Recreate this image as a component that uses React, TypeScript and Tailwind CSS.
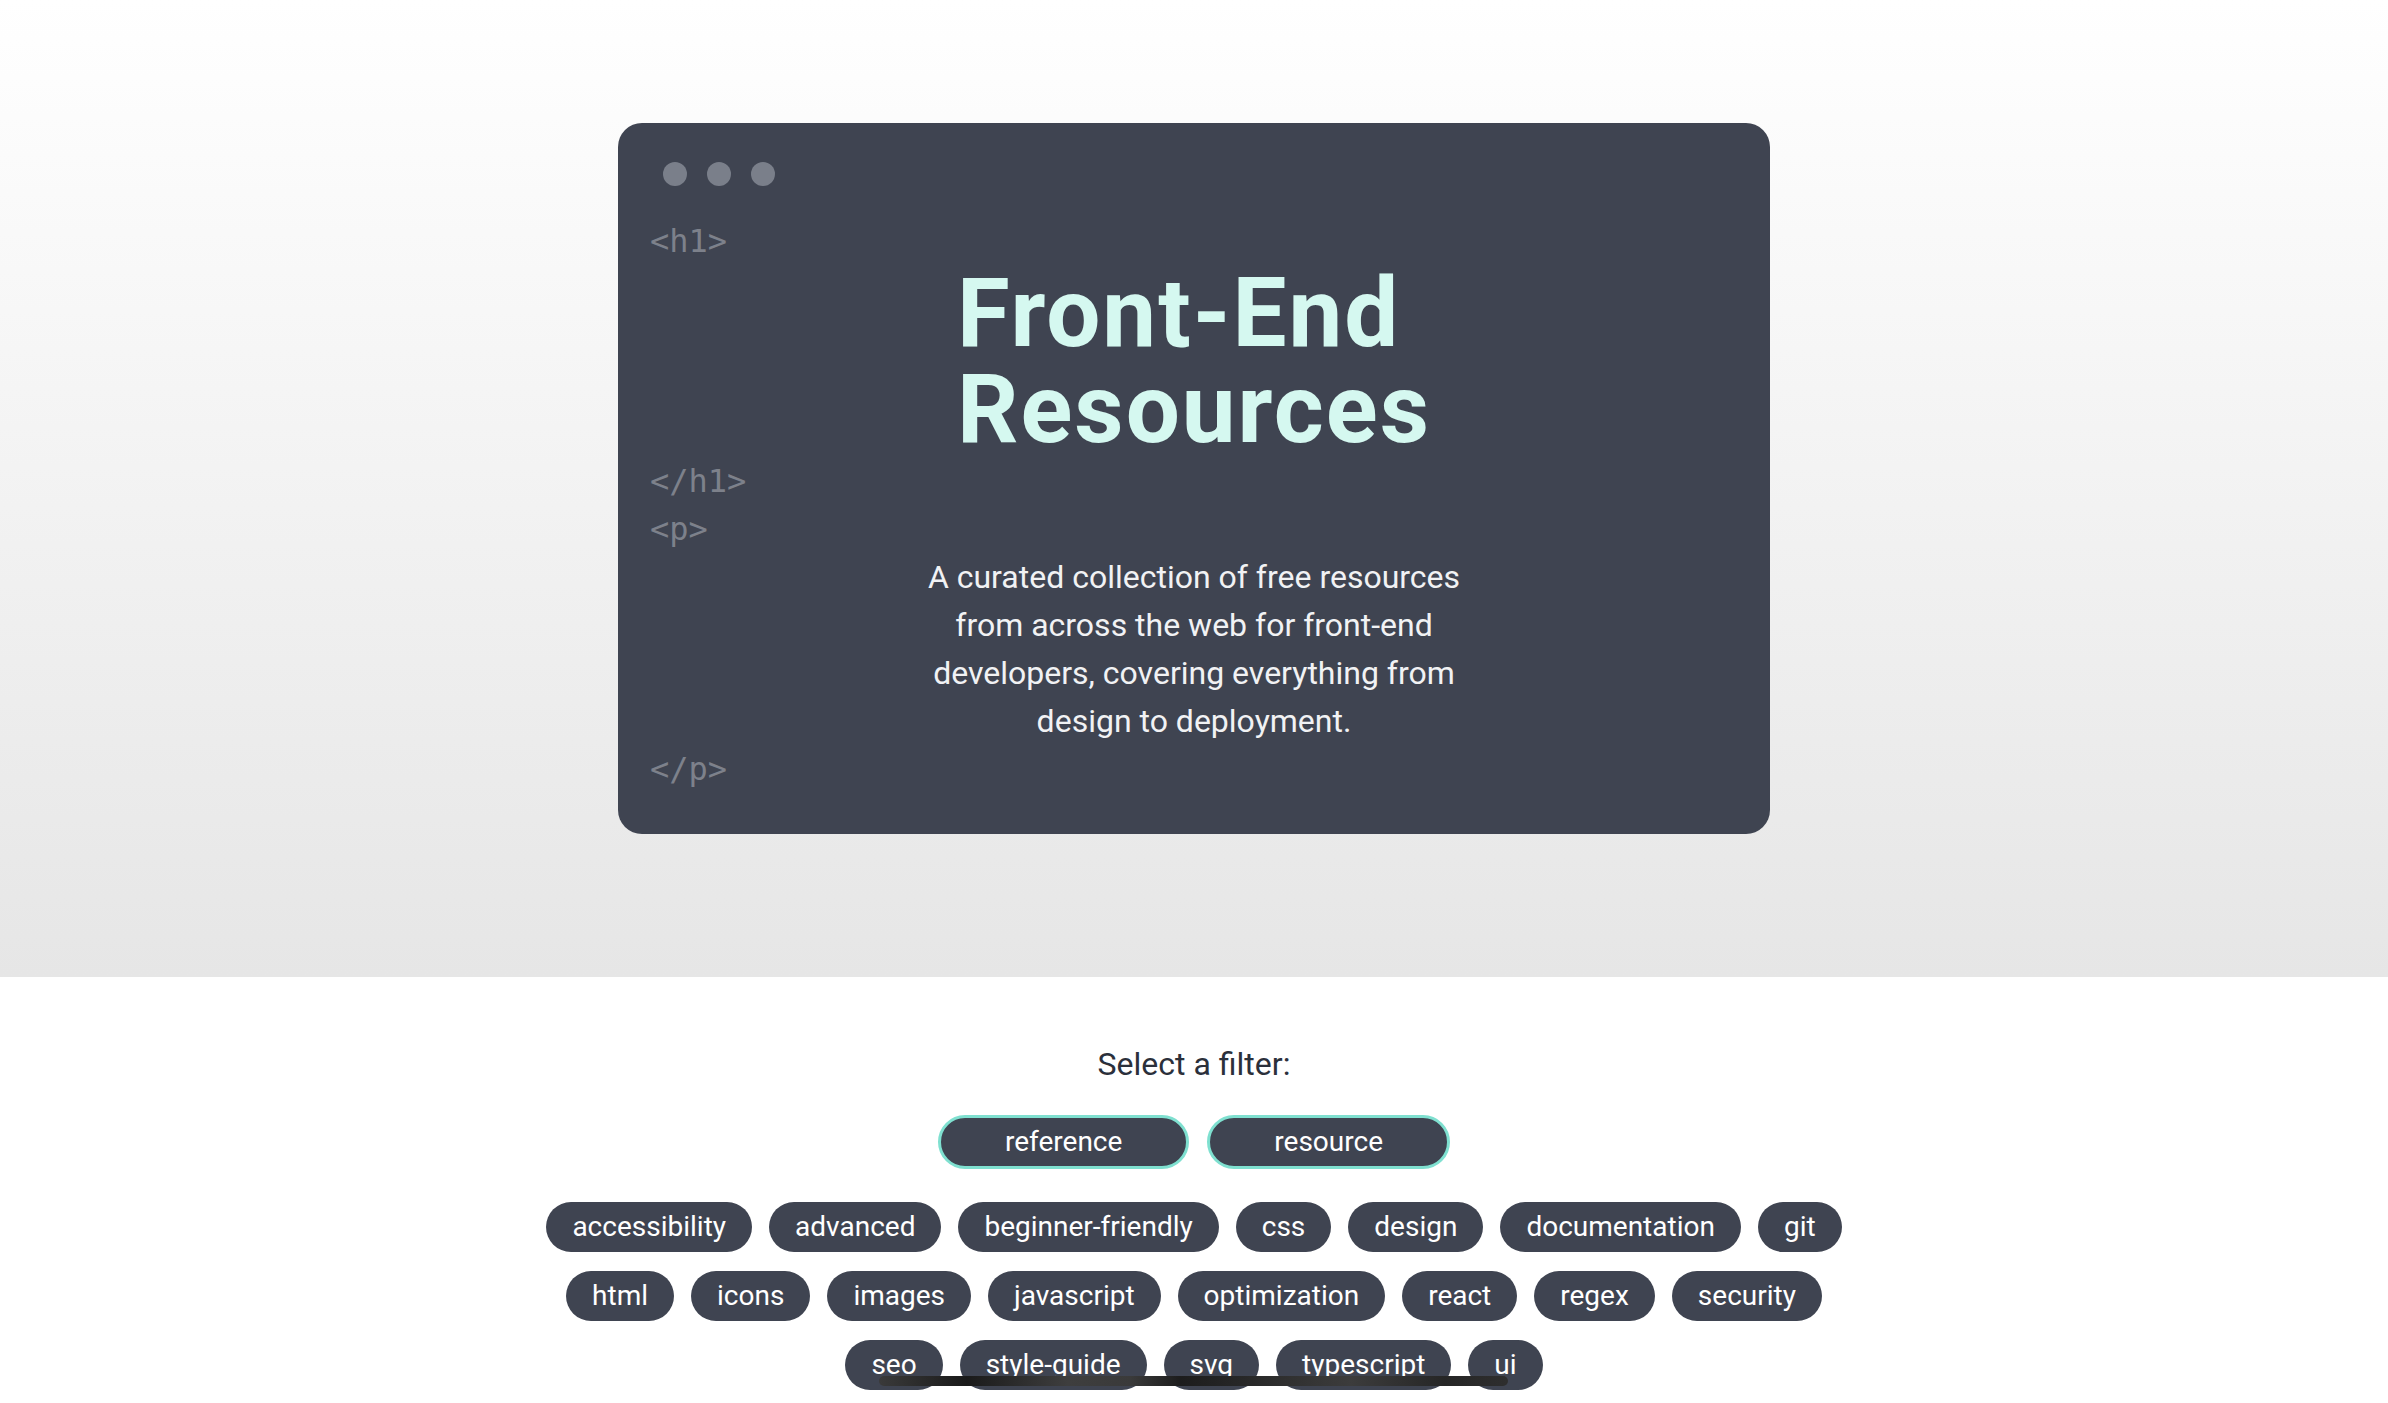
const tags = [
  "accessibility",
  "advanced",
  "beginner-friendly",
  "css",
  "design",
  "documentation",
  "git",
  "html",
  "icons",
  "images",
  "javascript",
  "optimization",
  "react",
  "regex",
  "security",
  "seo",
  "style-guide",
  "svg",
  "typescript",
  "ui",
];

const filters = ["reference", "resource"];

function CodeTag({ children }: { children: React.ReactNode }) {
  return (
    <span className="block w-fit font-['DejaVu_Sans_Mono',monospace] text-[32px] leading-[48px] text-[#7d818b]">
      {children}
    </span>
  );
}

function Hero() {
  return (
    <header className="bg-gradient-to-b from-white to-[#e6e6e6] pt-[123px] pb-[143px]">
      <div className="mx-auto w-[1152px] rounded-3xl bg-[#3f4451] px-8 pt-[39px] pb-[41px]">
        <div className="ml-[13px] flex gap-5">
          <span className="h-6 w-6 rounded-full bg-[#7a7f8a]" />
          <span className="h-6 w-6 rounded-full bg-[#7a7f8a]" />
          <span className="h-6 w-6 rounded-full bg-[#7a7f8a]" />
        </div>

        <div className="mt-[31px]">
          <CodeTag>&lt;h1&gt;</CodeTag>
          <h1 className="mx-auto w-fit text-left text-[96px] leading-[96px] font-bold tracking-[2px] text-[#d5f8f0]">
            Front-End
            <br />
            Resources
          </h1>
          <CodeTag>&lt;/h1&gt;</CodeTag>
          <CodeTag>&lt;p&gt;</CodeTag>
          <p className="mx-auto max-w-[560px] text-center text-[32px] leading-[48px] text-[#f1f2f4]">
            A curated collection of free resources from across the web for
            front-end developers, covering everything from design to
            deployment.
          </p>
          <CodeTag>&lt;/p&gt;</CodeTag>
        </div>
      </div>
    </header>
  );
}

function Filters() {
  return (
    <section className="relative flex flex-col items-center pt-[63px] pb-10">
      <p className="text-[32px] leading-[48px] text-[#2b303b]">Select a filter:</p>

      <div className="mt-[27px] flex gap-[18px]">
        {filters.map((f) => (
          <button
            key={f}
            className="rounded-full border-[3px] border-[#7fe0d0] bg-[#3f4451] px-16 py-[3px] text-[28px] leading-[42px] text-white"
          >
            {f}
          </button>
        ))}
      </div>

      <div className="mt-[33px] flex max-w-[1320px] flex-wrap justify-center gap-x-[17px] gap-y-[19px]">
        {tags.map((t) => (
          <button
            key={t}
            className="rounded-full bg-[#3f4451] px-[26px] py-1 text-[28px] leading-[42px] text-white"
          >
            {t}
          </button>
        ))}
      </div>

      <div className="absolute top-[399px] left-[879px] h-[10px] w-[629px] rounded-full bg-[linear-gradient(90deg,#3a3a3a_0%,#1a1a1a_14%,#3e3e3e_30%,#3a3a3a_40%,#1c1c1c_48%,#2a2a2a_60%,#3c3c3c_75%,#262626_90%,#2e2e2e_100%)]" />
    </section>
  );
}

export default function App() {
  return (
    <div className="min-h-screen bg-white font-['Roboto',sans-serif]">
      <Hero />
      <Filters />
    </div>
  );
}
